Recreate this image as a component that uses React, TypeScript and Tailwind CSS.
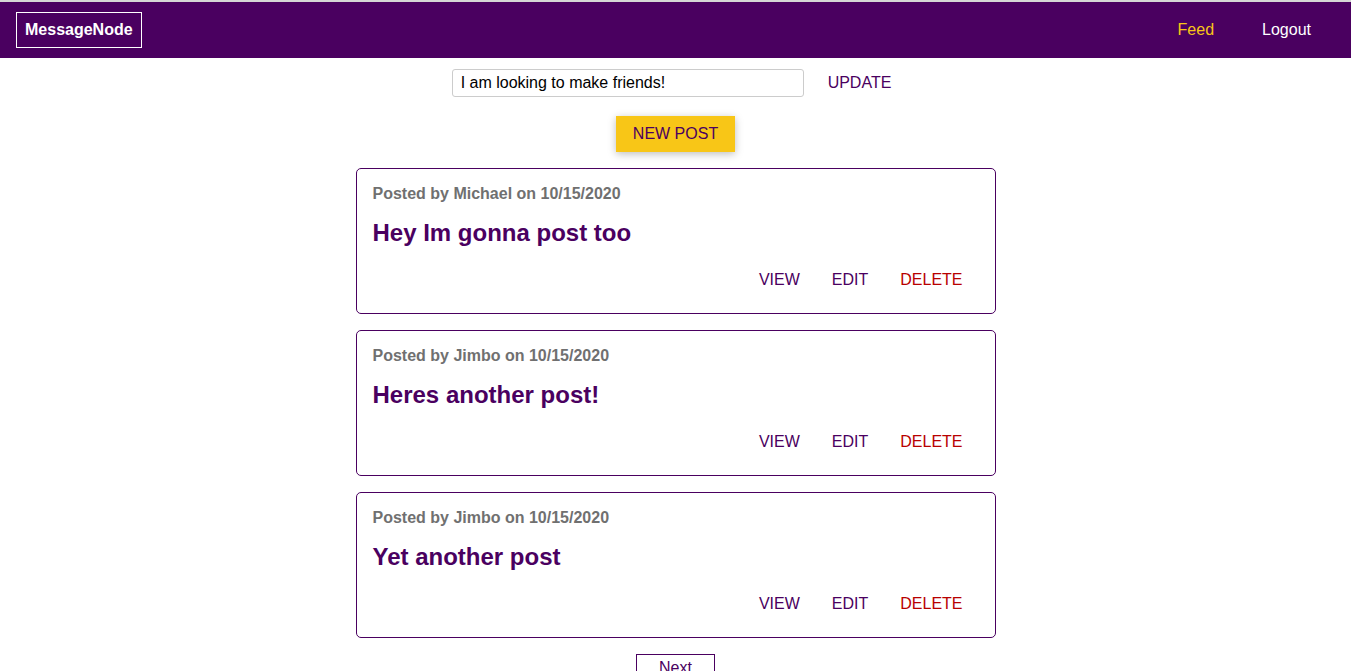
import { useState } from "react";

const posts = [
  { id: "1", author: "Michael", date: "10/15/2020", title: "Hey Im gonna post too" },
  { id: "2", author: "Jimbo", date: "10/15/2020", title: "Heres another post!" },
  { id: "3", author: "Jimbo", date: "10/15/2020", title: "Yet another post" },
];

export default function App() {
  const [status, setStatus] = useState("I am looking to make friends!");

  return (
    <div className="min-h-screen bg-white font-['Liberation_Sans',Arial,sans-serif] text-base">
      <div className="h-[2px] bg-[#d6d6d6]" />
      <header className="h-14 bg-[#4a0060] flex items-center justify-between px-4">
        <div className="border border-white px-2 py-2 leading-[18px] text-white font-bold">
          MessageNode
        </div>
        <nav className="flex items-center gap-12 pr-6 leading-[18px]">
          <a className="text-[#f8c617]">Feed</a>
          <a className="text-white">Logout</a>
        </nav>
      </header>

      <main className="flex flex-col items-center">
        <section className="mt-2 pl-4 flex items-center">
          <input
            value={status}
            onChange={(e) => setStatus(e.target.value)}
            className="w-[352px] h-7 border border-[#cccccc] rounded-[3px] px-2 text-black leading-[18px] outline-none"
          />
          <button className="px-6 py-2 leading-[18px] text-[#4a0060]">UPDATE</button>
        </section>

        <button className="mt-4 px-4 py-2 leading-[18px] border border-[#f8c617] bg-[#f8c617] text-[#4a0060] shadow-[0_2px_8px_rgba(0,0,0,0.26)]">
          NEW POST
        </button>

        <div className="mt-4 flex flex-col gap-4 w-[640px]">
          {posts.map((post) => (
            <article
              key={post.id}
              className="border border-[#4a0060] rounded-[5px] p-4"
            >
              <p className="text-[#707070] font-bold leading-[18px]">
                Posted by {post.author} on {post.date}
              </p>
              <h1 className="my-4 text-2xl leading-[28px] font-bold text-[#4a0060]">
                {post.title}
              </h1>
              <div className="flex justify-end">
                <button className="px-4 py-2 leading-[18px] text-[#4a0060]">VIEW</button>
                <button className="px-4 py-2 leading-[18px] text-[#4a0060]">EDIT</button>
                <button className="px-4 py-2 leading-[18px] text-[#b80000]">DELETE</button>
              </div>
            </article>
          ))}
        </div>

        <button className="mt-4 mb-4 px-[22px] py-1 leading-[18px] border border-[#4a0060] text-[#4a0060]">
          Next
        </button>
      </main>
    </div>
  );
}
